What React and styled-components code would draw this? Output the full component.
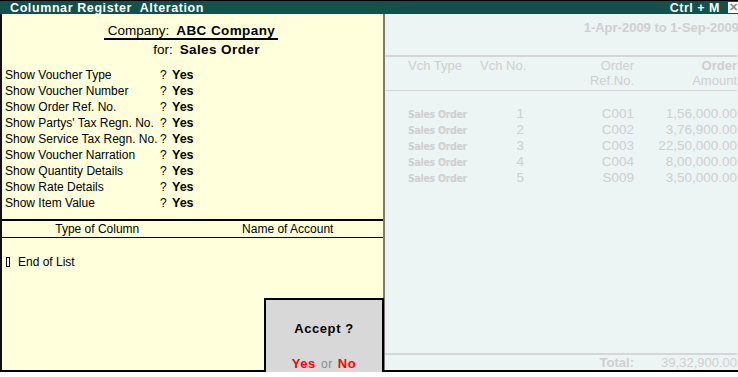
import React from "react"
import styled, { createGlobalStyle } from "styled-components"

const GlobalStyle = createGlobalStyle`
  html, body {
    margin: 0;
    padding: 0;
    background: #ffffff;
  }
  body {
    font-family: "Liberation Sans", Arial, sans-serif;
  }
`

const Screen = styled.div`
  position: relative;
  width: 738px;
  height: 377px;
  overflow: hidden;
  display: flex;
  flex-direction: column;
  background: #ffffff;
`

const TitleBar = styled.div`
  height: 13px;
  border-top: 1px solid #000;
  background: #12524a;
  color: #fff;
  display: flex;
  align-items: center;
  font-size: 12.5px;
  font-weight: bold;
  letter-spacing: 0.6px;
  padding-left: 10px;
`

const TitleText = styled.span`
  flex: 1;
  white-space: pre;
`

const Shortcut = styled.span`
  margin-right: 8px;
  letter-spacing: 0.5px;
`

const CloseBox = styled.span`
  width: 10px;
  height: 11px;
  background: #fff;
  color: #8a8a8a;
  font-size: 11px;
  line-height: 11px;
  text-align: center;
  letter-spacing: 0;
`

const Body = styled.div`
  flex: 1;
  display: flex;
  min-height: 0;
`

const LeftPanel = styled.div`
  width: 381px;
  background: #ffffdc;
  border-left: 2px solid #111;
  border-right: 2px solid #7a7a7a;
  display: flex;
  flex-direction: column;
  font-size: 12px;
  color: #000;
`

const Heading = styled.div`
  display: flex;
  flex-direction: column;
  align-items: center;
  padding-top: 10px;
  font-size: 13.5px;
  line-height: 16px;
`

const CompanyLine = styled.div`
  border-bottom: 2px solid #000;
  padding: 0 3px 0 4px;
  margin-left: -3px;
  line-height: 14px;
  height: 14px;
`

const ForLine = styled.div`
  margin-top: 2px;
  margin-left: 28px;
`

const Bold = styled.b`
  margin-left: 7px;
  letter-spacing: 0.4px;
`

const OptionList = styled.div`
  margin-top: 9px;
  padding-left: 3px;
`

const OptionRow = styled.div`
  display: grid;
  grid-template-columns: 155px 12px auto;
  height: 16px;
  line-height: 16px;
`

const Question = styled.span``

const Answer = styled.span`
  font-weight: bold;
  font-size: 12.5px;
`

const ColumnHeader = styled.div`
  margin-top: 8px;
  border-top: 2px solid #000;
  border-bottom: 1px solid #000;
  display: grid;
  grid-template-columns: 1fr 1fr;
  height: 16px;
  line-height: 16px;
  text-align: center;
`

const EndRow = styled.div`
  margin-top: 16px;
  padding-left: 4px;
  display: flex;
  align-items: center;
  gap: 8px;
  line-height: 16px;
`

const Marker = styled.span`
  display: inline-block;
  width: 2px;
  height: 8px;
  border: 1px solid #000;
`

const RightPanel = styled.div`
  flex: 1;
  background: #ecf4f4;
  overflow: hidden;
  display: flex;
  flex-direction: column;
  color: #cfcfcf;
  font-size: 13px;
`

const Inner = styled.div`
  width: 352px;
  flex: 1;
  display: flex;
  flex-direction: column;
`

const Period = styled.div`
  text-align: right;
  font-weight: bold;
  font-size: 13px;
  padding-top: 6px;
  height: 41px;
  line-height: 16px;
  box-sizing: border-box;
  margin-right: -2px;
`

const Grid = styled.div`
  display: grid;
  grid-template-columns: 23px 72px 44px 110px 103px;
`

const HeaderGrid = styled(Grid)`
  border-top: 2px solid #d6d6d6;
  border-bottom: 1px solid #d6d6d6;
  padding: 1px 0 2px;
  line-height: 15px;
`

const Cell = styled.span`
  text-align: ${({ align }) => align || "left"};
  font-weight: ${({ bold }) => (bold ? "bold" : "normal")};
  white-space: nowrap;
`

const Rows = styled.div`
  padding-top: 15px;
  flex: 1;
`

const DataRow = styled(Grid)`
  height: 16px;
  line-height: 16px;
  font-size: 13.5px;
`

const TypeCell = styled.span`
  font-family: "DejaVu Sans Condensed", "DejaVu Sans", sans-serif;
  font-weight: bold;
  font-size: 10.5px;
  letter-spacing: -0.3px;
`

const TotalRow = styled(Grid)`
  border-top: 2px solid #d6d6d6;
  height: 15px;
  line-height: 16px;
  font-weight: bold;
`

const BottomLine = styled.div`
  height: 5px;
  border-top: 2px solid #000;
  background: #ffffff;
`

const AcceptBox = styled.div`
  position: absolute;
  left: 264px;
  top: 298px;
  width: 116px;
  height: 72px;
  background: #d8d8d8;
  border: 2px solid #000;
  border-bottom: none;
  display: flex;
  flex-direction: column;
  align-items: center;
`

const AcceptTitle = styled.div`
  margin-top: 21px;
  font-size: 13px;
  font-weight: bold;
  letter-spacing: 0.6px;
`

const Choice = styled.div`
  margin-top: 20px;
  font-size: 13px;
  letter-spacing: 0.6px;
`

const Red = styled.span`
  color: #ff0000;
  font-weight: bold;
`

const Or = styled.span`
  color: #8a8a8a;
  margin: 0 5px;
  font-size: 12px;
`

const options = [
  "Show Voucher Type",
  "Show Voucher Number",
  "Show Order Ref. No.",
  "Show Partys' Tax Regn. No.",
  "Show Service Tax Regn. No.",
  "Show Voucher Narration",
  "Show Quantity Details",
  "Show Rate Details",
  "Show Item Value",
]

const orders = [
  { no: "1", ref: "C001", amount: "1,56,000.00" },
  { no: "2", ref: "C002", amount: "3,76,900.00" },
  { no: "3", ref: "C003", amount: "22,50,000.00" },
  { no: "4", ref: "C004", amount: "8,00,000.00" },
  { no: "5", ref: "S009", amount: "3,50,000.00" },
]

const App = () => {
  return (
    <Screen>
      <GlobalStyle />
      <TitleBar>
        <TitleText>{"Columnar Register  Alteration"}</TitleText>
        <Shortcut>Ctrl + M</Shortcut>
        <CloseBox>✕</CloseBox>
      </TitleBar>
      <Body>
        <LeftPanel>
          <Heading>
            <CompanyLine>
              Company:<Bold>ABC Company</Bold>
            </CompanyLine>
            <ForLine>
              for:<Bold>Sales Order</Bold>
            </ForLine>
          </Heading>
          <OptionList>
            {options.map((label) => (
              <OptionRow key={label}>
                <span>{label}</span>
                <Question>?</Question>
                <Answer>Yes</Answer>
              </OptionRow>
            ))}
          </OptionList>
          <ColumnHeader>
            <span>Type of Column</span>
            <span>Name of Account</span>
          </ColumnHeader>
          <EndRow>
            <Marker />
            <span>End of List</span>
          </EndRow>
        </LeftPanel>
        <RightPanel>
          <Inner>
            <Period>1-Apr-2009 to 1-Sep-2009</Period>
            <HeaderGrid>
              <span />
              <Cell>Vch Type</Cell>
              <Cell>Vch No.</Cell>
              <Cell align="right">
                Order
                <br />
                Ref.No.
              </Cell>
              <Cell align="right">
                <b>Order</b>
                <br />
                Amount
              </Cell>
            </HeaderGrid>
            <Rows>
              {orders.map((o) => (
                <DataRow key={o.ref}>
                  <span />
                  <TypeCell>Sales Order</TypeCell>
                  <Cell align="right">{o.no}</Cell>
                  <Cell align="right">{o.ref}</Cell>
                  <Cell align="right">{o.amount}</Cell>
                </DataRow>
              ))}
            </Rows>
            <TotalRow>
              <span />
              <span />
              <span />
              <Cell align="right" bold>
                Total:
              </Cell>
              <Cell align="right">39,32,900.00</Cell>
            </TotalRow>
          </Inner>
        </RightPanel>
      </Body>
      <BottomLine />
      <AcceptBox>
        <AcceptTitle>Accept ?</AcceptTitle>
        <Choice>
          <Red>Yes</Red>
          <Or>or</Or>
          <Red>No</Red>
        </Choice>
      </AcceptBox>
    </Screen>
  )
}

export default App
